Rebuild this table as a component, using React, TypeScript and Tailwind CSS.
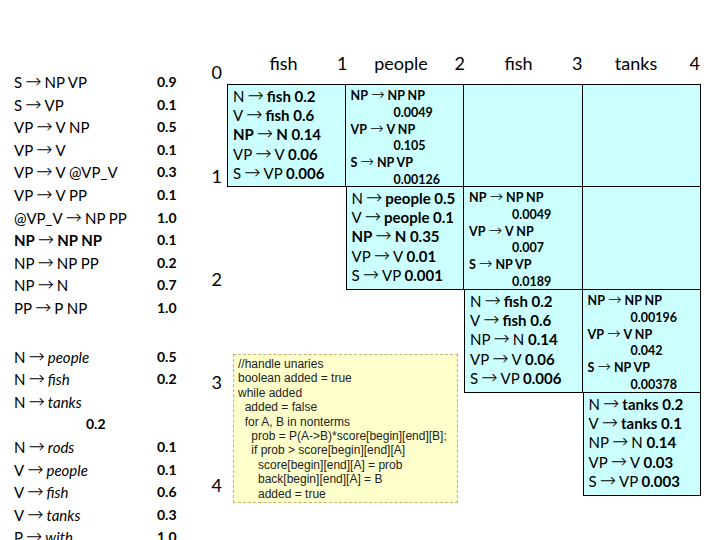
import React from "react";

const rules: { lhs: string; rhs: string; p: string; bold?: boolean }[] = [
  { lhs: "S", rhs: "NP VP", p: "0.9" },
  { lhs: "S", rhs: "VP", p: "0.1" },
  { lhs: "VP", rhs: "V NP", p: "0.5" },
  { lhs: "VP", rhs: "V", p: "0.1" },
  { lhs: "VP", rhs: "V @VP_V", p: "0.3" },
  { lhs: "VP", rhs: "V PP", p: "0.1" },
  { lhs: "@VP_V", rhs: "NP PP", p: "1.0" },
  { lhs: "NP", rhs: "NP NP", p: "0.1", bold: true },
  { lhs: "NP", rhs: "NP PP", p: "0.2" },
  { lhs: "NP", rhs: "N", p: "0.7" },
  { lhs: "PP", rhs: "P NP", p: "1.0" },
];

const lexicon: { lhs: string; word: string; p: string }[] = [
  { lhs: "N", word: "people", p: "0.5" },
  { lhs: "N", word: "fish", p: "0.2" },
  { lhs: "N", word: "tanks", p: "" },
  { lhs: "", word: "", p: "wrap" },
  { lhs: "N", word: "rods", p: "0.1" },
  { lhs: "V", word: "people", p: "0.1" },
  { lhs: "V", word: "fish", p: "0.6" },
  { lhs: "V", word: "tanks", p: "0.3" },
  { lhs: "P", word: "with", p: "1.0" },
];

const code = `//handle unaries
boolean added = true
while added
  added = false
  for A, B in nonterms
    prob = P(A->B)*score[begin][end][B];
    if prob > score[begin][end][A]
      score[begin][end][A] = prob
      back[begin][end][A] = B
      added = true`;

function Arrow() {
  return <span className="inline-block leading-[0.8] font-['DejaVu_Sans'] font-light text-[1.3em] ml-[3px] mr-[3px]">→</span>;
}

function Lexical({ word, n, v, np, vp, s, strongNp }: { word: string; n: string; v: string; np: string; vp: string; s: string; strongNp?: boolean }) {
  return (
    <div className="pl-[5px] pt-[2px] text-[15px] leading-[19.2px] whitespace-nowrap">
      <div className="h-[19.2px]">N<Arrow /><b>{word} {n}</b></div>
      <div className="h-[19.2px]">V<Arrow /><b>{word} {v}</b></div>
      {strongNp ? (
        <div className="h-[19.2px] font-bold">NP<Arrow />N {np}</div>
      ) : (
        <div className="h-[19.2px]">NP<Arrow />N <b>{np}</b></div>
      )}
      <div className="h-[19.2px]">VP<Arrow />V <b>{vp}</b></div>
      <div className="h-[19.2px]">S<Arrow />VP <b>{s}</b></div>
    </div>
  );
}

function Binary({ a, b, c }: { a: string; b: string; c: string }) {
  return (
    <div className="pl-[5px] pt-[3px] text-[12.5px] leading-[16.8px] font-bold whitespace-nowrap">
      <div className="h-[16.8px]">NP<Arrow />NP NP</div>
      <div className="h-[16.8px] pl-[43px]">{a}</div>
      <div className="h-[16.8px]">VP<Arrow />V NP</div>
      <div className="h-[16.8px] pl-[43px]">{b}</div>
      <div className="h-[16.8px]">S<Arrow />NP VP</div>
      <div className="h-[16.8px] pl-[43px]">{c}</div>
    </div>
  );
}

export default function App() {
  return (
    <div className="w-[720px] h-[540px] overflow-hidden bg-white text-black font-['Lato',sans-serif] flex">
      {/* grammar */}
      <div className="w-[200px] pl-[14px] pt-[71px] shrink-0">
        {rules.map((r, i) => (
          <div key={i} className={`grid grid-cols-[143px_auto] h-[22.6px] text-[15px] leading-[22.6px] ${r.bold ? "font-bold" : ""}`}>
            <span>{r.lhs}<Arrow />{r.rhs}</span>
            <span className="font-bold text-[14px]">{r.p}</span>
          </div>
        ))}
        <div className="mt-[26px]">
          {lexicon.map((r, i) =>
            r.p === "wrap" ? (
              <div key={i} className="h-[22.6px] pl-[72px] text-[14px] font-bold leading-[22.6px]">0.2</div>
            ) : (
              <div key={i} className="grid grid-cols-[143px_auto] h-[22.6px] text-[15px] leading-[22.6px]">
                <span>{r.lhs}<Arrow /><i>{r.word}</i></span>
                <span className="font-bold text-[14px]">{r.p}</span>
              </div>
            )
          )}
        </div>
      </div>

      {/* chart */}
      <div className="pt-[45px]">
        <div className="grid grid-cols-[27px_repeat(4,118.5px)] grid-rows-[39px_repeat(4,103px)]">
          {["0", "1", "2", "3", "4"].map((l, i) => (
            <div key={l} className={`col-start-1 flex items-end justify-end pr-[5px] text-[18px] leading-none ${i === 0 ? "row-start-1 pb-[3px]" : i === 1 ? "row-start-2 pb-[2px]" : i === 2 ? "row-start-3 pb-[2px]" : i === 3 ? "row-start-4 pb-[2px]" : "row-start-5 pb-[2px]"}`}>
              {l}
            </div>
          ))}

          <div className="col-start-2 col-span-4 row-start-1 flex items-center pl-[4px] pb-[2px] text-[18px]">
            {[["fish", "1"], ["people", "2"], ["fish", "3"], ["tanks", "4"]].map(([w, n]) => (
              <React.Fragment key={n}>
                <span className="w-[106px] text-center">{w}</span>
                <span className="w-[12.5px] text-center">{n}</span>
              </React.Fragment>
            ))}
          </div>

          {/* row 0 */}
          <div className="col-start-2 row-start-2 bg-[#ccffff] border-black border-t border-l border-r border-b">
            <Lexical word="fish" n="0.2" v="0.6" np="0.14" vp="0.06" s="0.006" strongNp />
          </div>
          <div className="col-start-3 row-start-2 bg-[#ccffff] border-black border-t border-r border-b">
            <Binary a="0.0049" b="0.105" c="0.00126" />
          </div>
          <div className="col-start-4 row-start-2 bg-[#ccffff] border-black border-t border-r border-b" />
          <div className="col-start-5 row-start-2 bg-[#ccffff] border-black border-t border-r border-b" />

          {/* row 1 */}
          <div className="col-start-3 row-start-3 bg-[#ccffff] border-black border-l border-r border-b">
            <Lexical word="people" n="0.5" v="0.1" np="0.35" vp="0.01" s="0.001" strongNp />
          </div>
          <div className="col-start-4 row-start-3 bg-[#ccffff] border-black border-r border-b">
            <Binary a="0.0049" b="0.007" c="0.0189" />
          </div>
          <div className="col-start-5 row-start-3 bg-[#ccffff] border-black border-r border-b" />

          {/* row 2 */}
          <div className="col-start-4 row-start-4 bg-[#ccffff] border-black border-l border-r border-b">
            <Lexical word="fish" n="0.2" v="0.6" np="0.14" vp="0.06" s="0.006" />
          </div>
          <div className="col-start-5 row-start-4 bg-[#ccffff] border-black border-r border-b">
            <Binary a="0.00196" b="0.042" c="0.00378" />
          </div>

          {/* row 3 */}
          <div className="col-start-5 row-start-5 bg-[#ccffff] border-black border-l border-r border-b">
            <Lexical word="tanks" n="0.2" v="0.1" np="0.14" vp="0.03" s="0.003" />
          </div>

          {/* pseudo code note */}
          <div className="col-start-2 col-span-2 row-start-4 row-span-2 self-start mt-[64px] ml-[6px] w-[225px] h-[149px] bg-[#ffffcc] border border-dashed border-[#c8b07a] pl-[4px] pt-[2px] font-['Liberation_Sans',sans-serif] text-[12px] leading-[14.4px] text-[#222] whitespace-pre">
            {code}
          </div>
        </div>
      </div>
    </div>
  );
}
